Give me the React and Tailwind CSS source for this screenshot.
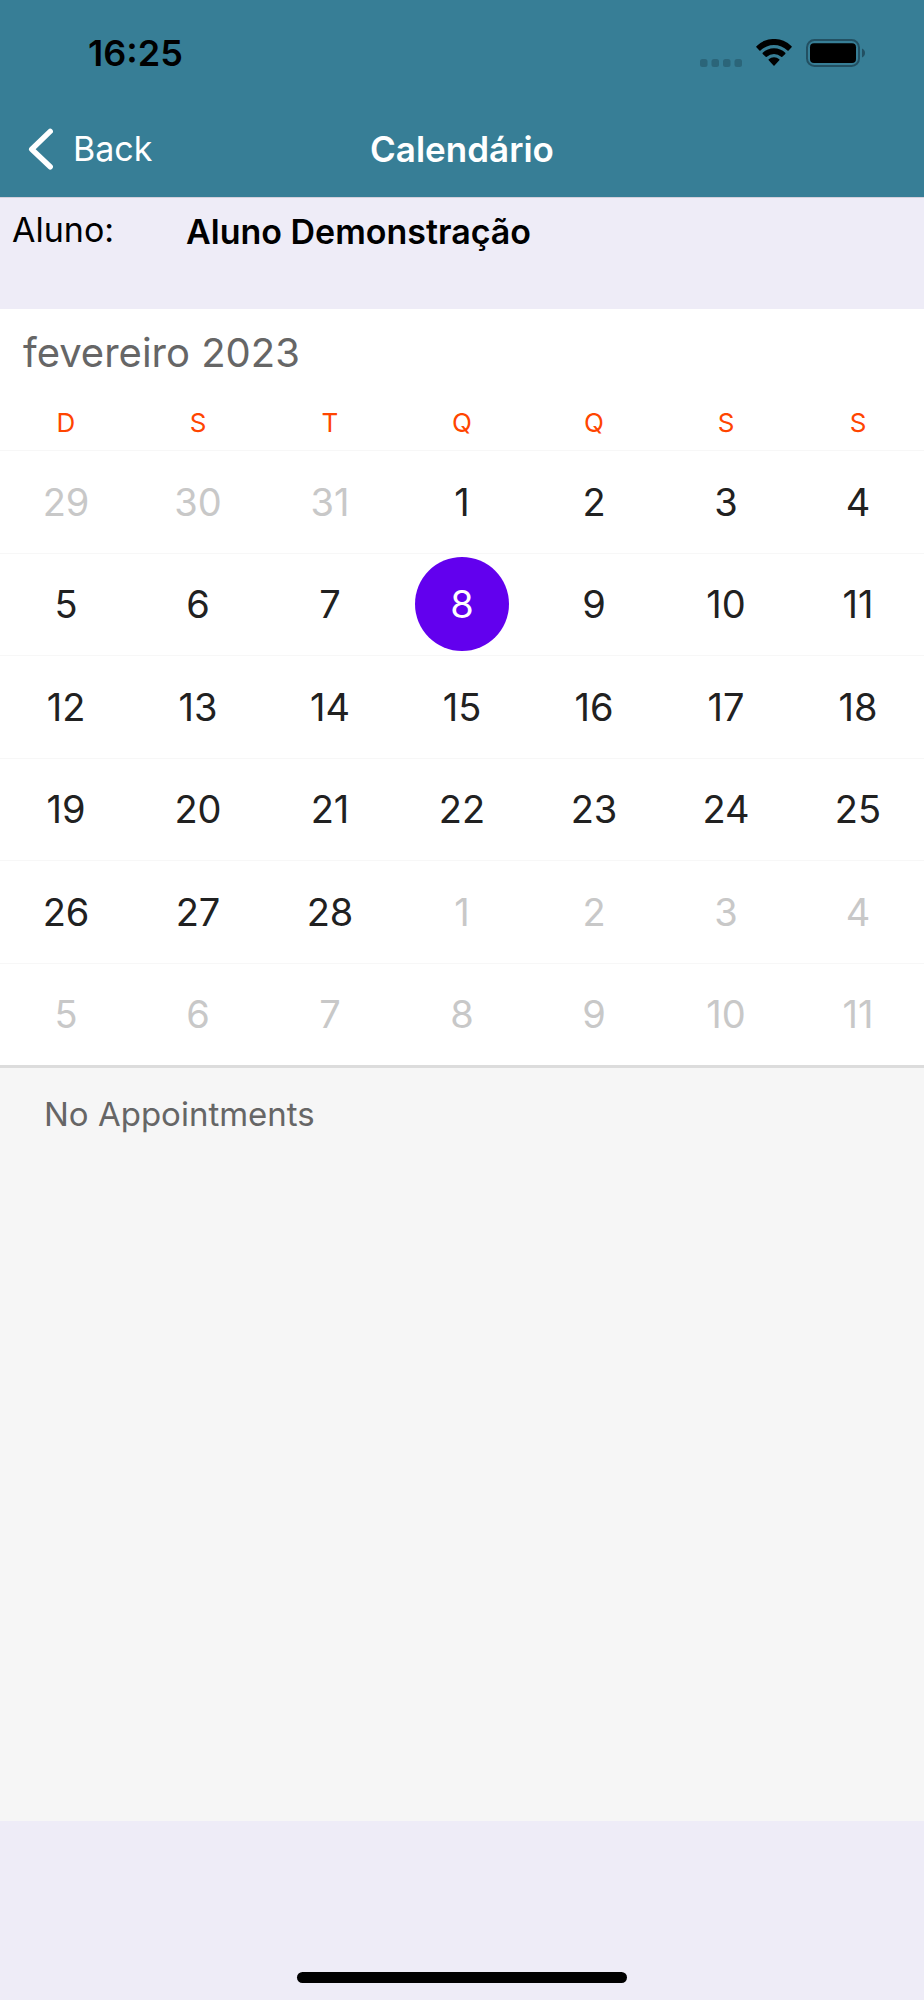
import React, { useState } from 'react';

const weekdays = ['D', 'S', 'T', 'Q', 'Q', 'S', 'S'];

const weeks = [
  [29, 30, 31, 1, 2, 3, 4],
  [5, 6, 7, 8, 9, 10, 11],
  [12, 13, 14, 15, 16, 17, 18],
  [19, 20, 21, 22, 23, 24, 25],
  [26, 27, 28, 1, 2, 3, 4],
  [5, 6, 7, 8, 9, 10, 11],
];

// index of Feb 1st and of the first day of March in the flattened grid
const MONTH_START = 3;
const MONTH_END = 31;

function StatusBar() {
  return (
    <div className="flex h-[106px] items-center justify-between pl-[88px] pr-[59px] text-black">
      <span className="text-[36px] leading-[44px] font-semibold">16:25</span>
      <div className="flex items-center gap-[14px]">
        <svg width="42" height="28" viewBox="0 0 42 28" fill="#2b6579">
          <rect x="0" y="20" width="7.5" height="8" rx="2.5" />
          <rect x="11.5" y="20" width="7.5" height="8" rx="2.5" />
          <rect x="23" y="20" width="7.5" height="8" rx="2.5" />
          <rect x="34.5" y="20" width="7.5" height="8" rx="2.5" />
        </svg>
        <svg width="36" height="28" viewBox="0 0 36 28" fill="currentColor">
          <path d="M.4 8.3a.9.9 0 0 1 0-1.1A25 25 0 0 1 35.6 7.2a.9.9 0 0 1 0 1.1L32.6 11.4a.8.8 0 0 1-1.1 0A19.6 19.6 0 0 0 4.5 11.4a.8.8 0 0 1-1.1 0Z" />
          <path d="M6.7 14.9a.9.9 0 0 1 0-1.1A16.4 16.4 0 0 1 29.3 13.8a.9.9 0 0 1 0 1.1L26.3 17.8a.8.8 0 0 1-1.1 0A10.8 10.8 0 0 0 10.8 17.8a.8.8 0 0 1-1.1 0Z" />
          <path d="M12.7 21.3a.8.8 0 0 1 0-1.1A8.4 8.4 0 0 1 23.3 20.2a.8.8 0 0 1 0 1.1L18.5 26.5a.7.7 0 0 1-1 0Z" />
        </svg>
        <svg width="59" height="28" viewBox="0 0 59 28">
          <rect x="1" y="1" width="52" height="26" rx="7.5" fill="none" stroke="#225062" strokeWidth="2" />
          <rect x="4" y="4.3" width="46" height="19.6" rx="4" fill="#000" />
          <path d="M56 9.6c1.8.7 3 2.4 3 4.4s-1.2 3.7-3 4.4Z" fill="#225062" />
        </svg>
      </div>
    </div>
  );
}

function NavBar() {
  return (
    <div className="grid h-[91px] grid-cols-3 items-center px-7 pb-[6px] text-white">
      <button type="button" className="flex items-center gap-5 justify-self-start text-[34px] leading-[44px]">
        <svg width="25" height="42" viewBox="0 0 25 42" fill="none">
          <path d="M22.2 3.4L3.7 21.2L22.2 38.8" stroke="currentColor" strokeWidth="5.4" strokeLinecap="round" strokeLinejoin="round" />
        </svg>
        Back
      </button>
      <h1 className="text-center text-[35px] leading-[44px] font-semibold">Calendário</h1>
    </div>
  );
}

export default function App() {
  const [selected, setSelected] = useState(10);

  return (
    <div className="flex min-h-screen flex-col bg-[#eeecf7] font-['Inter','Liberation_Sans',sans-serif]">
      <header className="bg-[#377e96]">
        <StatusBar />
        <NavBar />
      </header>

      <section className="flex h-[112px] items-start border-t border-[#d3d0dc] pl-3 pt-2 text-black">
        <span className="w-[174px] text-[34px] leading-[48px]">Aluno:</span>
        <span className="pt-1 text-[34px] leading-[44px] font-semibold">Aluno Demonstração</span>
      </section>

      <section className="bg-white">
        <h2 className="h-[88px] pl-[23px] pt-[18px] text-[40px] leading-[52px] text-[#666]">fevereiro 2023</h2>
        <table className="w-full table-fixed border-collapse text-center">
          <thead>
            <tr className="h-[53px]">
              {weekdays.map((d, i) => (
                <th key={i} scope="col" className="p-0 align-top text-[26px] leading-[52px] font-normal text-[#ff4500]">
                  {d}
                </th>
              ))}
            </tr>
          </thead>
          <tbody>
            {weeks.map((week, w) => (
              <tr key={w} className="h-[103px] border-t border-[#f7f7f7] even:h-[102px]">
                {week.map((day, d) => {
                  const index = w * 7 + d;
                  const inMonth = index >= MONTH_START && index < MONTH_END;
                  const color = index === selected
                    ? 'bg-[#6200ee] text-white'
                    : inMonth ? 'text-[#212121]' : 'text-[#c8c8c8]';
                  return (
                    <td key={d} className="p-0">
                      <button
                        type="button"
                        onClick={() => setSelected(index)}
                        className={`mx-auto flex size-[94px] items-center justify-center rounded-full text-[38px] leading-[48px] ${color}`}
                      >
                        {day}
                      </button>
                    </td>
                  );
                })}
              </tr>
            ))}
          </tbody>
        </table>
      </section>

      <section className="flex-1 border-t-3 border-[#dcdcdc] bg-[#f6f6f6] pl-11 pt-6">
        <p className="text-[33px] leading-[44px] text-[#666]">No Appointments</p>
      </section>

      <footer className="flex h-[179px] items-end justify-center pb-[17px]">
        <div className="h-[11px] w-[330px] rounded-full bg-black" />
      </footer>
    </div>
  );
}
